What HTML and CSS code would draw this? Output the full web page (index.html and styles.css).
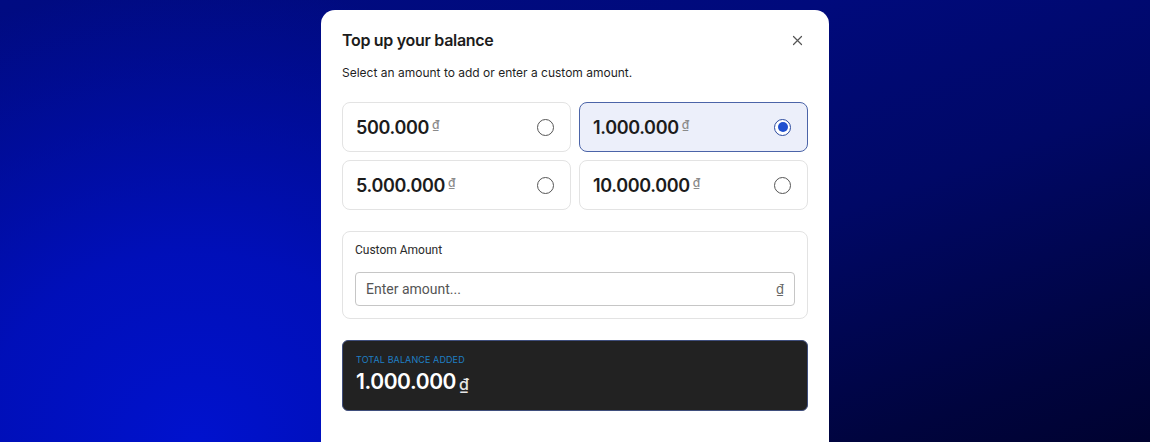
FILE: index.html
```html
<!DOCTYPE html>
<html lang="en">
<head>
<meta charset="utf-8">
<title>Top up your balance</title>
<link rel="stylesheet" href="styles.css">
</head>
<body>
<div class="page">
  <div class="modal">
    <div class="modal-head">
      <h2 class="title">Top up your balance</h2>
      <button class="close" aria-label="Close">
        <svg width="11" height="11" viewBox="0 0 11 11"><path d="M1.5 1.5 L9.5 9.5 M9.5 1.5 L1.5 9.5" stroke="#555" stroke-width="1.2" stroke-linecap="round" fill="none"/></svg>
      </button>
    </div>
    <p class="subtitle">Select an amount to add or enter a custom amount.</p>
    <div class="options">
      <div class="option"><span class="amount">500.000<span class="cur">₫</span></span><span class="radio"></span></div>
      <div class="option selected"><span class="amount">1.000.000<span class="cur">₫</span></span><span class="radio"><span class="dot"></span></span></div>
      <div class="option"><span class="amount">5.000.000<span class="cur">₫</span></span><span class="radio"></span></div>
      <div class="option"><span class="amount">10.000.000<span class="cur">₫</span></span><span class="radio"></span></div>
    </div>
    <div class="custom">
      <label class="custom-label">Custom Amount</label>
      <div class="input">
        <span class="placeholder">Enter amount...</span>
        <span class="input-cur">₫</span>
      </div>
    </div>
    <div class="total">
      <div class="total-label">TOTAL BALANCE ADDED</div>
      <div class="total-amount">1.000.000<span class="total-cur">₫</span></div>
    </div>
  </div>
</div>
</body>
</html>
```

FILE: styles.css
```css
* { box-sizing: border-box; }
html, body { margin: 0; padding: 0; height: 100%; overflow: hidden; }
body {
  font-family: "Inter", "Noto Sans", sans-serif;
  background:
    radial-gradient(ellipse 620px 540px at 17% 100%, rgba(0,18,206,1) 0%, rgba(0,16,196,0.85) 35%, rgba(0,12,150,0) 85%),
    linear-gradient(160deg, #000b82 0%, #000a7c 35%, #000866 60%, #00043e 88%, #000230 100%);
}
.page {
  display: flex;
  justify-content: center;
  padding-top: 10px;
  height: 100%;
}
.modal {
  width: 508px;
  height: 100%;
  background: #fff;
  border-radius: 14px 14px 0 0;
  padding: 20px 21px 0;
}
.modal-head {
  display: flex;
  align-items: center;
  justify-content: space-between;
  height: 20px;
}
.title {
  margin: 0;
  font-size: 16px;
  font-weight: 600;
  color: #1c1c1c;
  letter-spacing: -0.3px;
  line-height: 20px;
}
.close {
  border: 0;
  background: none;
  padding: 0;
  width: 11px;
  height: 11px;
  margin-right: 5px;
  display: flex;
}
.subtitle {
  margin: 15px 0 0;
  font-size: 12px;
  line-height: 16px;
  color: #1f1f1f;
}
.options {
  margin-top: 21px;
  display: grid;
  grid-template-columns: 1fr 1fr;
  gap: 8px;
}
.option {
  height: 50px;
  border: 1px solid #e3e3e3;
  border-radius: 8px;
  display: flex;
  align-items: center;
  justify-content: space-between;
  padding: 0 16px 0 13px;
  background: #fff;
}
.option.selected {
  background: #eceffa;
  border-color: #4b64a8;
}
.amount {
  font-size: 18px;
  font-weight: 600;
  color: #1c1c1c;
  letter-spacing: -0.35px;
  display: flex;
  align-items: flex-start;
}
.cur {
  font-size: 12px;
  font-weight: 500;
  color: #8a8a8a;
  margin-left: 3px;
  margin-top: 0;
}
.radio {
  width: 17px;
  height: 17px;
  border: 1.3px solid #555;
  border-radius: 50%;
  display: flex;
  align-items: center;
  justify-content: center;
}
.selected .radio {
  border: 1.5px solid #2b4a9e;
  background: #fff;
}
.dot {
  width: 10px;
  height: 10px;
  border-radius: 50%;
  background: #1f4fcf;
}
.custom {
  margin-top: 21px;
  border: 1px solid #e3e3e3;
  border-radius: 8px;
  padding: 11px 12px 12px;
  display: flex;
  flex-direction: column;
}
.custom-label {
  font-family: "Roboto", "Liberation Sans", sans-serif;
  font-size: 12px;
  line-height: 14px;
  color: #2a2a2a;
}
.input {
  margin-top: 15px;
  height: 34px;
  border: 1px solid #c6c6c6;
  border-radius: 4px;
  display: flex;
  align-items: center;
  justify-content: space-between;
  padding: 0 10px 0 10px;
}
.placeholder {
  font-family: "Roboto", "Liberation Sans", sans-serif;
  font-size: 14px;
  color: #555;
}
.input-cur {
  font-size: 13px;
  color: #666;
}
.total {
  margin-top: 21px;
  background: #222222;
  border: 1px solid #3f4e7c;
  border-radius: 6px;
  padding: 13px 13px 13px;
}
.total-label {
  font-size: 9px;
  line-height: 11px;
  color: #1f7fc4;
  letter-spacing: 0.1px;
}
.total-amount {
  margin-top: 4px;
  font-size: 21px;
  font-weight: 600;
  color: #fff;
  letter-spacing: -0.4px;
  line-height: 26px;
  display: flex;
  align-items: flex-start;
}
.total-cur {
  font-size: 16px;
  font-weight: 500;
  color: #e6e6e6;
  margin-left: 3px;
  margin-top: 2px;
}
```
